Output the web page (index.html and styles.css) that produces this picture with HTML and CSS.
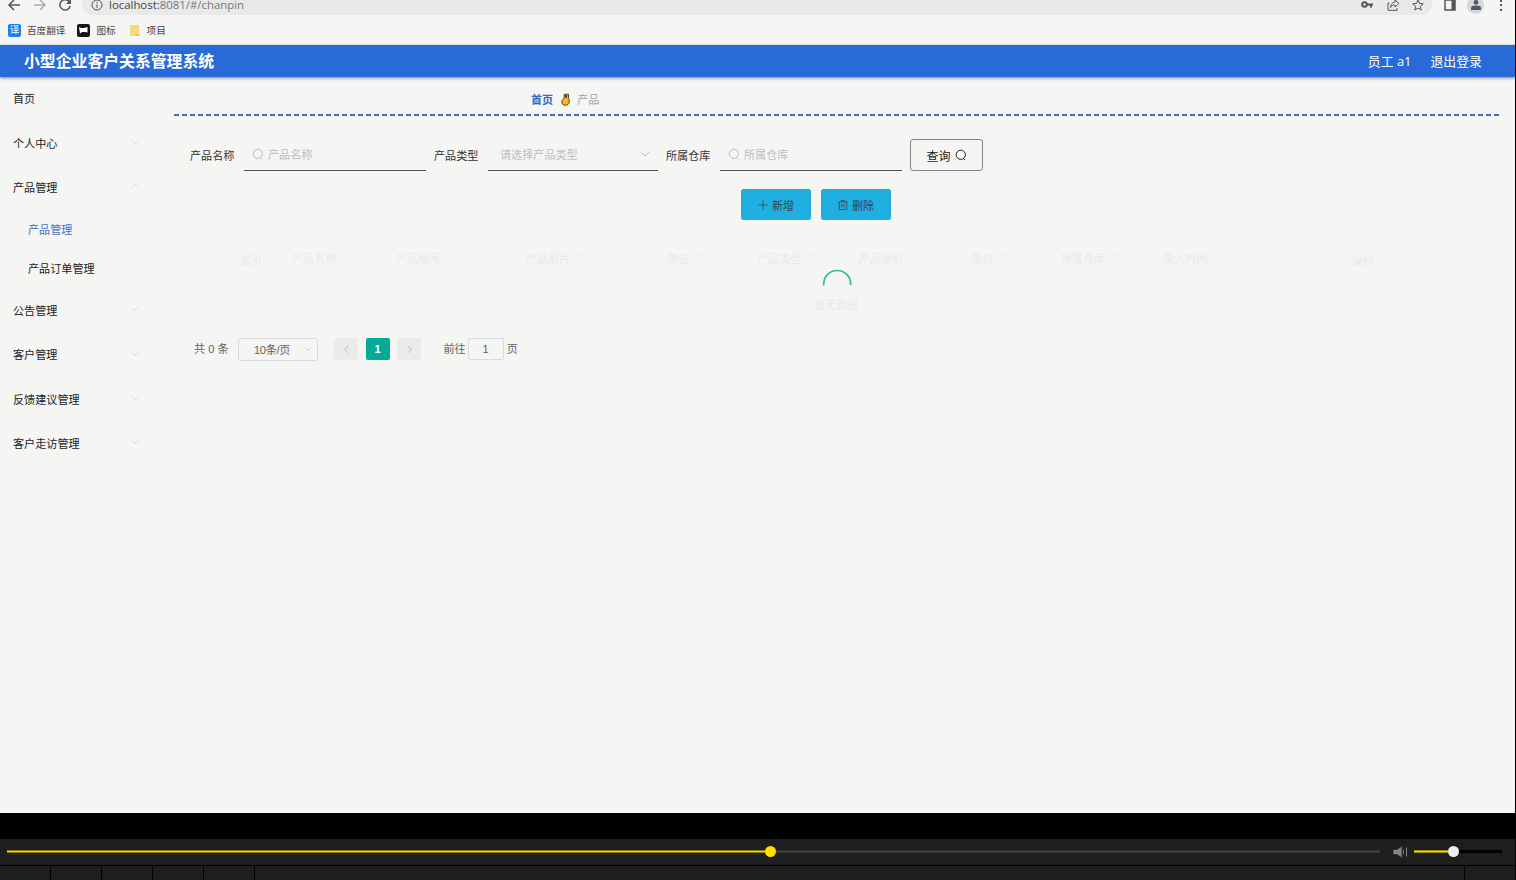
FILE: index.html
```
<!DOCTYPE html>
<html lang="zh-CN">
<head>
    <meta charset="UTF-8">
    <meta name="viewport" content="width=device-width, initial-scale=1.0">
    <title>小型企业客户关系管理系统</title>
    <link rel="stylesheet" href="styles.css">
</head>
<body>
    <svg class="sprite">
        <symbol id="down" viewBox="0 0 10 10"><path d="M1 3l4 4 4-4"/></symbol>
        <symbol id="up" viewBox="0 0 10 10"><path d="M1 7l4-4 4 4"/></symbol>
        <symbol id="search" viewBox="0 0 12 12"><circle cx="5.800" cy="5.800" r="4.600"/><path d="M8.600 9.600l1.400 1.600"/></symbol>
    </svg>

    <div class="screen">
        <div class="toolbar">
            <svg class="nav-back" width="14" height="14" viewBox="0 0 14 14"><path d="M13 7H2M7 2L2 7l5 5"/></svg>
            <svg class="nav-forward" width="14" height="14" viewBox="0 0 14 14"><path d="M1 7h11M7 2l5 5-5 5"/></svg>
            <svg class="nav-reload" width="14" height="14" viewBox="0 0 14 14"><path d="M11.6 4.2A5.2 5.2 0 1 0 12.2 8"/><path class="solid" d="M13 1v5H8z"/></svg>
            <div class="address">
                <svg width="12" height="12" viewBox="0 0 12 12"><circle cx="6" cy="6" r="5"/><path d="M6 5.3v3.5M6 3v1.2"/></svg>
                <span class="url">localhost:<em>8081/#/chanpin</em></span>
                <div class="address-icons">
                    <svg width="13" height="12" viewBox="0 0 13 12"><circle cx="3.5" cy="5.5" r="2.3" stroke-width="2"/><path stroke-width="2" d="M6 5.5h6M10 5.5v3"/></svg>
                    <svg class="thin" width="13" height="12" viewBox="0 0 13 12"><path d="M2.5 4H1v7.3h9V9M8 1l4 3.5L8 8V6C6 6 4.500 6.600 3.500 8.500 3.700 5.500 5.500 3.300 8 3z"/></svg>
                    <svg class="thin" width="12" height="12" viewBox="0 0 12 12"><path d="M6 1l1.500 3.400 3.700.4-2.800 2.500.8 3.700L6 9.100 2.800 11l.8-3.700L.8 4.800l3.700-.4z"/></svg>
                </div>
            </div>
            <svg class="panel-icon" width="12" height="12" viewBox="0 0 12 12"><path d="M1 1h10v10H1z"/><path class="solid" d="M7.500 1H11v10H7.500z"/></svg>
            <span class="avatar"><svg width="10" height="10" viewBox="0 0 10 10"><circle cx="5" cy="2.400" r="2.400"/><path d="M0 10V8c0-2 2-2.600 5-2.600S10 6 10 8v2z"/></svg></span>
            <span class="dots"><i></i><i></i><i></i></span>
        </div>

        <div class="bookmarks">
            <span class="mark mark-yi">译</span><span class="mark-text">百度翻译</span>
            <svg class="mark" width="13" height="13" viewBox="0 0 13 13"><rect width="13" height="13" rx="2" fill="#151515"/><path d="M2 3l2 1h3l3.500-1v5.500L8 8H5l-2 1.500z" fill="#fff"/></svg><span class="mark-text">图标</span>
            <svg class="mark" width="13" height="13" viewBox="0 0 13 13"><path d="M2 1h9v9h1v2H3l-1-1z" fill="#f6d978"/><path d="M9 10v1.500h2" stroke="#dab958" fill="none"/></svg><span class="mark-text">项目</span>
        </div>

        <header class="header">
            <h1>小型企业客户关系管理系统</h1>
            <div class="user"><span>员工 a1</span><span>退出登录</span></div>
        </header>

        <div class="container">
            <ul class="menu">
                <li>首页</li>
                <li>个人中心<svg><use href="#down"/></svg></li>
                <li>产品管理<svg><use href="#up"/></svg></li>
                <li class="sub active">产品管理</li>
                <li class="sub">产品订单管理</li>
                <li>公告管理<svg><use href="#down"/></svg></li>
                <li>客户管理<svg><use href="#down"/></svg></li>
                <li>反馈建议管理<svg><use href="#down"/></svg></li>
                <li>客户走访管理<svg><use href="#down"/></svg></li>
            </ul>

            <main class="main">
                <div class="breadcrumb">
                    <b>首页</b>
                    <svg width="9" height="13" viewBox="0 0 9 13"><path d="M3.300 5.500L3.200 1.800C3.300.6 4.700.6 4.900 1.800L5.200 4 6 1.300C6.400.4 7.700.7 7.600 1.900L7.400 5.500C8.300 6.500 8.400 7.500 8.200 9 7.900 11.300 6.500 12.300 4.500 12.300 2 12.300.8 10.800.8 8.800.8 7 1.800 6 3.300 5.500z" fill="#fbb41f" stroke="#47340f" stroke-width=".9"/><path d="M5 1.500v3.500" stroke="#2d220d"/></svg>
                    <span>产品</span>
                </div>
                <div class="dash"></div>

                <form class="search-form">
                    <label>产品名称</label>
                    <div class="field"><svg><use href="#search"/></svg>产品名称</div>
                    <label>产品类型</label>
                    <div class="field select">请选择产品类型<svg><use href="#down"/></svg></div>
                    <label>所属仓库</label>
                    <div class="field"><svg><use href="#search"/></svg>所属仓库</div>
                    <button type="button" class="query">查询<svg><use href="#search"/></svg></button>
                </form>

                <div class="actions">
                    <button type="button"><svg viewBox="0 0 10 10"><path d="M5 .5v9M.5 5h9"/></svg>新增</button>
                    <button type="button"><svg viewBox="0 0 10 10"><path d="M.3 2h9.400M3.300 2V.5h3.400V2M1.300 2v7.500h7.400V2M3.800 4v3.500M6.200 4v3.500"/></svg>删除</button>
                </div>

                <div class="table">
                    <div class="thead">
                        <span class="th index">索引</span>
                        <span class="th name sort">产品名称</span>
                        <span class="th code sort">产品编号</span>
                        <span class="th photo sort">产品照片</span>
                        <span class="th unit sort">单位</span>
                        <span class="th type sort">产品类型</span>
                        <span class="th old-price sort">产品原价</span>
                        <span class="th unit sort">现价</span>
                        <span class="th type sort">所属仓库</span>
                        <span class="th time sort">录入时间</span>
                        <span class="th operate">操作</span>
                    </div>
                    <div class="loading">
                        <svg width="30" height="30" viewBox="0 0 30 30"><path d="M1.700 16.500V15a13.500 13.500 0 0 1 27 0v1"/></svg>
                        <span>暂无数据</span>
                    </div>
                </div>

                <div class="pagination">
                    <span class="total">共 0 条</span>
                    <span class="size">10条/页<svg><use href="#down"/></svg></span>
                    <span class="page"><svg viewBox="0 0 10 10"><path d="M7 1L3 5l4 4"/></svg></span>
                    <span class="page current">1</span>
                    <span class="page"><svg viewBox="0 0 10 10"><path d="M3 1l4 4-4 4"/></svg></span>
                    <span class="jump">前往</span>
                    <span class="jump-input">1</span>
                    <span>页</span>
                </div>
            </main>
        </div>
    </div>

    <div class="player">
        <div class="controls">
            <div class="progress"><div class="played"></div><i class="knob"></i></div>
            <svg class="speaker" width="15" height="14" viewBox="0 0 15 14"><path d="M0 4.500h4L9 1v12L4 9.500H0z" fill="#858585"/><path d="M10.500 4.500v5" stroke="#686868"/><path d="M13.500 2.500v9" stroke="#858585"/></svg>
            <div class="volume"><div class="level"></div><i class="knob"></i></div>
        </div>
        <div class="tabs"><i></i><i></i><i></i><i></i><i></i><i class="rest"></i></div>
    </div>
</body>
</html>
```
FILE: styles.css
```
*{
    margin: 0;
    padding: 0;
    box-sizing: border-box;
}

body{
    width: 1516px;
    height: 880px;
    overflow: hidden;
    background: #000;
    font-family: "Liberation Sans", "Noto Sans CJK SC", sans-serif;
    font-size: 11.1px;
    color: #333;
}

svg{
    fill: none;
    stroke: currentColor;
    flex-shrink: 0;
}

.sprite{
    display: none;
}

.solid{
    fill: currentColor;
    stroke: none;
}

.screen{
    width: 1515px;
    height: 813px;
    background: #f5f5f4;
    overflow: hidden;
}

/* browser bar */
.toolbar{
    height: 25px;
    margin-top: -10px;
    padding-left: 7px;
    display: flex;
    align-items: center;
    color: #555;
    padding-top: 5px;
}

.toolbar > svg{
    stroke-width: 1.5;
}

.nav-forward{
    margin-left: 12px;
    color: #aaa;
}

.nav-reload{
    margin-left: 11px;
}

.address{
    width: 1350px;
    height: 20px;
    margin-left: 10px;
    padding: 0 8px 0 9px;
    display: flex;
    align-items: center;
    background: #e9e9e9;
    border-radius: 0 0 10px 10px;
}

.url{
    margin-left: 6px;
    font-family: "Open Sans", sans-serif;
    font-size: 11.4px;
    line-height: 10px;
    color: #444;
}

.url em{
    font-style: normal;
    color: #777;
}

.address-icons{
    margin-left: auto;
    display: flex;
    gap: 12.5px;
}

.panel-icon{
    margin-left: 12px;
}

.avatar{
    width: 17px;
    height: 17px;
    margin-left: 11px;
    border-radius: 50%;
    background: #d5d7dc;
    display: flex;
    align-items: center;
    justify-content: center;
}

.avatar svg{
    fill: #505769;
    stroke: none;
}

.dots{
    margin-left: 16px;
    display: flex;
    flex-direction: column;
    gap: 2.5px;
}

.dots i{
    width: 2px;
    height: 2px;
    background: #555;
}

.bookmarks{
    height: 30px;
    padding-left: 8px;
    display: flex;
    align-items: center;
    font-size: 9.6px;
    color: #444;
}

.mark{
    width: 13px;
    height: 13px;
    stroke: none;
}

.mark-yi{
    border-radius: 2px;
    background: #1683f2;
    color: #fff;
    font-size: 9.5px;
    line-height: 12px;
    text-align: center;
}

.mark-text{
    margin: 0 12px 0 6px;
}

/* page header */
.header{
    position: relative;
    height: 32px;
    padding: 0 33px 0 24px;
    display: flex;
    align-items: center;
    justify-content: space-between;
    background: #276ad8;
    box-shadow: 0 1px 3px rgba(0, 0, 0, .5);
    color: #fff;
}

.header h1{
    padding-top: 2px;
    font-size: 15.85px;
    line-height: 30px;
}

.user{
    padding-bottom: 2px;
    display: flex;
    gap: 19px;
    font-family: "Open Sans", "Noto Sans CJK SC", sans-serif;
    font-size: 12.9px;
}

.container{
    display: flex;
}

.menu{
    width: 174px;
    list-style: none;
    color: #222;
}

.menu li{
    height: 44.4px;
    padding: 0 35px 2px 13px;
    display: flex;
    align-items: center;
    justify-content: space-between;
}

.menu svg{
    width: 8px;
    height: 8px;
    margin-bottom: 1px;
    color: #d2d2d2;
}

.menu li.sub{
    height: 39.2px;
    padding-left: 28px;
}

.menu li.active{
    color: #3b72c9;
}

.main{
    width: 1325px;
}

.breadcrumb{
    height: 37px;
    padding: 6px 0 0 357px;
    display: flex;
    align-items: center;
    gap: 7px;
    color: #9fa4ad;
}

.breadcrumb b{
    color: #346cc0;
}

.breadcrumb svg{
    margin: 2px 0 0 1px;
}

.dash{
    height: 2px;
    background: repeating-linear-gradient(90deg, #3c70bb 0 5px, transparent 5px 8px);
}

.search-form{
    height: 32px;
    margin-top: 23px;
    padding-left: 16px;
    display: flex;
    align-items: center;
}

.search-form label{
    width: 45px;
    margin-right: 9px;
}

.field{
    width: 182px;
    height: 32px;
    margin-right: 8px;
    padding: 0 8px 1px;
    display: flex;
    align-items: center;
    gap: 4px;
    border-bottom: 1px solid #555;
    color: #bcbec2;
}

.field svg{
    width: 12px;
    height: 12px;
}

.select{
    width: 170px;
    padding-left: 12px;
}

.select svg{
    width: 10px;
    height: 10px;
    margin-left: auto;
}

.query{
    width: 73px;
    height: 32px;
    display: flex;
    align-items: center;
    justify-content: center;
    gap: 4px;
    background: none;
    border: 1px solid #858585;
    border-radius: 3px;
    font-family: inherit;
    font-size: 12px;
    color: #222;
}

.query svg{
    width: 12px;
    height: 12px;
}

.actions{
    margin: 18px 0 0 567px;
    display: flex;
    gap: 10px;
}

.actions button{
    width: 70px;
    height: 31px;
    display: flex;
    align-items: center;
    justify-content: center;
    gap: 4px;
    background: #20afe1;
    border: 1px solid #2da8d8;
    border-radius: 2px;
    font-family: inherit;
    font-size: 11.1px;
    color: #33444c;
}

.actions svg{
    width: 10px;
    height: 10px;
    stroke-width: .8;
}

/* table is covered by the loading mask */
.table{
    height: 117px;
    padding-top: 28px;
    color: #e9e9e9;
}

.thead{
    height: 20px;
    padding-left: 66px;
    display: flex;
    align-items: center;
}

.th{
    width: 102px;
    flex-shrink: 0;
    display: flex;
    align-items: center;
    gap: 7px;
}

.th.index, .th.operate{
    padding-top: 3px;
}

.th.index{
    width: 52px;
}

.th.name{
    width: 104px;
}

.th.code{
    width: 130px;
}

.th.photo{
    width: 141px;
}

.th.unit{
    width: 90px;
}

.th.old-price{
    width: 112px;
}

.th.time{
    width: 189px;
}

.th.operate{
    width: 30px;
}

.sort::after{
    content: "";
    width: 6px;
    height: 5px;
    border-top: 1px solid #ededed;
    border-bottom: 1px solid #ededed;
}

.loading{
    padding-top: 1px;
    display: flex;
    flex-direction: column;
    align-items: center;
}

.loading svg{
    color: #35b9a1;
    stroke-width: 1.7;
}

.loading span{
    margin-top: -3px;
}

.pagination{
    height: 24px;
    padding-left: 20px;
    display: flex;
    align-items: center;
    color: #606266;
}

.pagination > span:not(.size){
    line-height: 20px;
}

.total{
    width: 44px;
}

.size{
    width: 80px;
    height: 23px;
    margin-right: 16px;
    padding: 0 5px 0 15px;
    display: flex;
    align-items: center;
    justify-content: space-between;
    border: 1px solid #d8dade;
    border-radius: 2px;
    letter-spacing: -.3px;
}

.size svg{
    width: 8px;
    height: 8px;
    color: #c0c4cc;
}

.page{
    width: 24px;
    height: 22px;
    margin-right: 7.5px;
    display: flex;
    align-items: center;
    justify-content: center;
    background: #ebebeb;
    border-radius: 2px;
    color: #b5b8bd;
}

.page svg{
    width: 9px;
    height: 9px;
}

.page.current{
    background: #04ab96;
    color: #fff;
    font-weight: bold;
}

.jump{
    margin-left: 15px;
}

.jump-input{
    width: 36px;
    height: 22px;
    margin: 0 3px 0 2px;
    border: 1px solid #d8dade;
    border-radius: 2px;
    text-align: center;
}

/* video player */
.player{
    padding-top: 26px;
}

.controls{
    width: 1515px;
    height: 26px;
    padding: 0 0 1px 7px;
    display: flex;
    align-items: center;
    background: #1e1e1e;
}

.progress, .volume{
    height: 3px;
    display: flex;
    align-items: center;
}

.progress{
    width: 1373px;
    background: linear-gradient(#292929, #424242, #292929);
}

.played{
    width: 758px;
    height: 3px;
    background: linear-gradient(#8a7900 0 33%, #f5dc1c 33% 66%, #8a7900 66%);
}

.knob{
    width: 11px;
    height: 11px;
    border-radius: 50%;
    background: #ffde00;
}

.speaker{
    margin: 0 6px 0 13px;
}

.volume{
    width: 88px;
    background: #000;
}

.level{
    width: 34px;
    height: 3px;
    background: linear-gradient(#a08c00 0 33%, #f5dc1c 33% 66%, #a08c00 66%);
}

.volume .knob{
    background: #eee;
}

.tabs{
    height: 15px;
    padding-top: 1px;
    display: flex;
    gap: 1px;
}

.tabs i{
    width: 50px;
    height: 14px;
    background: #1e1e1e;
}

.tabs .rest{
    width: 1260px;
    background: linear-gradient(90deg, #1e1e1e 1209px, #000 1209px 1210px, #1e1e1e 1210px);
}
```
